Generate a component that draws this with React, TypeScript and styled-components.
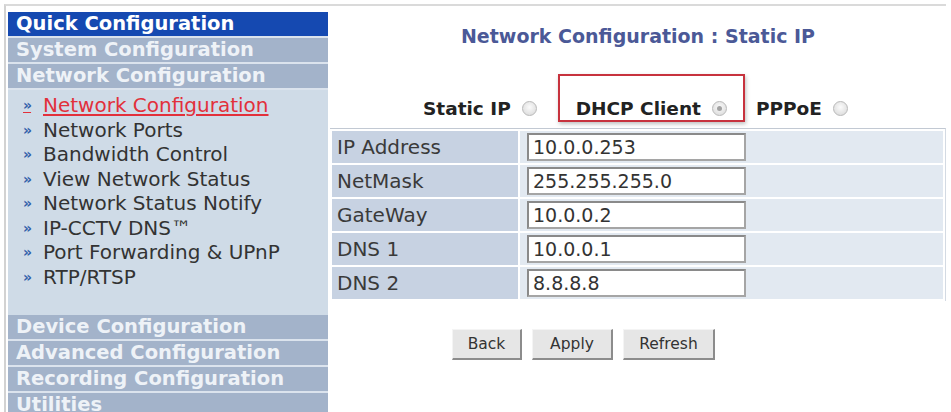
import React from 'react'
import styled, { createGlobalStyle, css } from 'styled-components'

const GlobalStyle = createGlobalStyle`
  html, body { margin: 0; padding: 0; background: #fff; }
  body { font-family: "DejaVu Sans", Verdana, sans-serif; color: #333; }
`

const Frame = styled.div`
  padding: 4px 5px 0 4px;
  height: 412px;
  box-sizing: border-box;
  overflow: hidden;
`

const Canvas = styled.div`
  display: flex;
  gap: 2px;
  height: 100%;
  box-sizing: border-box;
  padding: 6px 0 0 2px;
  border-top: 2px solid #dadada;
  border-left: 2px solid #d2d2d2;
`

const Sidebar = styled.nav`
  width: 320px;
  flex: none;
  background: #cfdbe7;
  display: flex;
  flex-direction: column;
`

const SectionHead = styled.div`
  height: 24px;
  line-height: 24px;
  padding-left: 8px;
  font-size: 19.5px;
  font-weight: 700;
  white-space: nowrap;
  color: ${p => (p.active ? '#ffffff' : '#eef2f7')};
  background: ${p => (p.active ? '#1549b1' : '#a3b3ca')};
  border-bottom: 2px solid #dbe3ed;
`

const SubMenu = styled.ul`
  list-style: none;
  margin: 0;
  padding: 3px 0 26px 15px;
`

const SubItem = styled.li`
  display: flex;
  align-items: center;
  height: 24.5px;
  font-size: 20px;
  white-space: nowrap;
  color: ${p => (p.current ? '#e2303b' : '#333')};
  text-decoration: ${p => (p.current ? 'underline' : 'none')};
  text-underline-offset: 2px;
`

const Bullet = styled.span`
  width: 20px;
  flex: none;
  font-size: 14px;
  font-weight: 700;
  color: #3461aa;
  letter-spacing: -1px;
`

const Main = styled.main`
  flex: 1;
  display: flex;
  flex-direction: column;
`

const Title = styled.h1`
  margin: 0;
  padding-top: 10px;
  line-height: 28px;
  text-align: center;
  font-size: 19px;
  font-weight: 700;
  color: #4b5997;
`

const Options = styled.div`
  display: flex;
  align-items: flex-end;
  margin-top: 24px;
  padding-left: 93px;
`

const Option = styled.label`
  display: inline-flex;
  align-items: center;
  gap: 11px;
  height: 22px;
  font-size: 18.5px;
  font-weight: 700;
  color: #222;
  white-space: nowrap;
  padding-bottom: 3px;
  ${p => p.highlighted && css`
    margin: 0 11px 0 21px;
    padding: 21px 16px 1px 16px;
    border: 2px solid #c7323d;
    box-shadow: 1px 2px 4px rgba(0, 0, 0, 0.25);
  `}
`

const Radio = styled.span`
  position: relative;
  width: 15px;
  height: 15px;
  border-radius: 50%;
  box-sizing: border-box;
  border: 1px solid #b9b9b9;
  background: radial-gradient(circle at 50% 40%, #fbfbfb, #d6d6d6);
  ${p => p.checked && css`
    &::after {
      content: '';
      position: absolute;
      left: 4px;
      top: 4px;
      width: 5px;
      height: 5px;
      border-radius: 50%;
      background: #a2a2a2;
    }
  `}
`

const Table = styled.div`
  margin-top: 6px;
  display: grid;
  grid-template-columns: 186px 1fr;
  gap: 2px;
  padding: 2px;
  border-top: 1px solid #c2c9d3;
  border-right: 1px solid #d3dae3;
`

const LabelCell = styled.div`
  height: 32px;
  line-height: 32px;
  padding-left: 5px;
  font-size: 20px;
  color: #3a3a3a;
  background: #c7d2e2;
`

const ValueCell = styled.div`
  height: 32px;
  display: flex;
  align-items: center;
  padding-left: 7px;
  background: #e2e9f1;
`

const Field = styled.input`
  width: 219px;
  height: 28px;
  box-sizing: border-box;
  padding: 0 4px;
  font-family: "DejaVu Sans", Verdana, sans-serif;
  font-size: 19px;
  color: #333;
  background: #fff;
  border: 2px solid #8a8a8a;
  border-right-color: #a5a5a5;
  border-bottom-color: #a5a5a5;
`

const Buttons = styled.div`
  display: flex;
  gap: 10px;
  margin-top: 28px;
  padding-left: 122px;
`

const Button = styled.button`
  height: 31px;
  padding: 0;
  width: ${p => p.w}px;
  font-family: "DejaVu Sans", Verdana, sans-serif;
  font-size: 15.5px;
  color: #333;
  background: #e6e6e6;
  border: 1px solid #f4f4f4;
  border-right: 2px solid #8c8c8c;
  border-bottom: 2px solid #8c8c8c;
`

const menu = [
  'Network Configuration',
  'Network Ports',
  'Bandwidth Control',
  'View Network Status',
  'Network Status Notify',
  'IP-CCTV DNS™',
  'Port Forwarding & UPnP',
  'RTP/RTSP'
]

const fields = [
  ['IP Address', '10.0.0.253'],
  ['NetMask', '255.255.255.0'],
  ['GateWay', '10.0.0.2'],
  ['DNS 1', '10.0.0.1'],
  ['DNS 2', '8.8.8.8']
]

export default function App() {
  return (
    <Frame>
      <GlobalStyle />
      <Canvas>
        <Sidebar>
          <SectionHead active>Quick Configuration</SectionHead>
          <SectionHead>System Configuration</SectionHead>
          <SectionHead>Network Configuration</SectionHead>
          <SubMenu>
            {menu.map((m, i) => (
              <SubItem key={m} current={i === 0}>
                <Bullet>»</Bullet>
                {m}
              </SubItem>
            ))}
          </SubMenu>
          <SectionHead>Device Configuration</SectionHead>
          <SectionHead>Advanced Configuration</SectionHead>
          <SectionHead>Recording Configuration</SectionHead>
          <SectionHead>Utilities</SectionHead>
        </Sidebar>
        <Main>
          <Title>Network Configuration : Static IP</Title>
          <Options>
            <Option>Static IP <Radio /></Option>
            <Option highlighted>DHCP Client <Radio checked /></Option>
            <Option>PPPoE <Radio /></Option>
          </Options>
          <Table>
            {fields.map(([label, value]) => (
              <React.Fragment key={label}>
                <LabelCell>{label}</LabelCell>
                <ValueCell>
                  <Field defaultValue={value} />
                </ValueCell>
              </React.Fragment>
            ))}
          </Table>
          <Buttons>
            <Button w={70}>Back</Button>
            <Button w={81}>Apply</Button>
            <Button w={92}>Refresh</Button>
          </Buttons>
        </Main>
      </Canvas>
    </Frame>
  )
}
